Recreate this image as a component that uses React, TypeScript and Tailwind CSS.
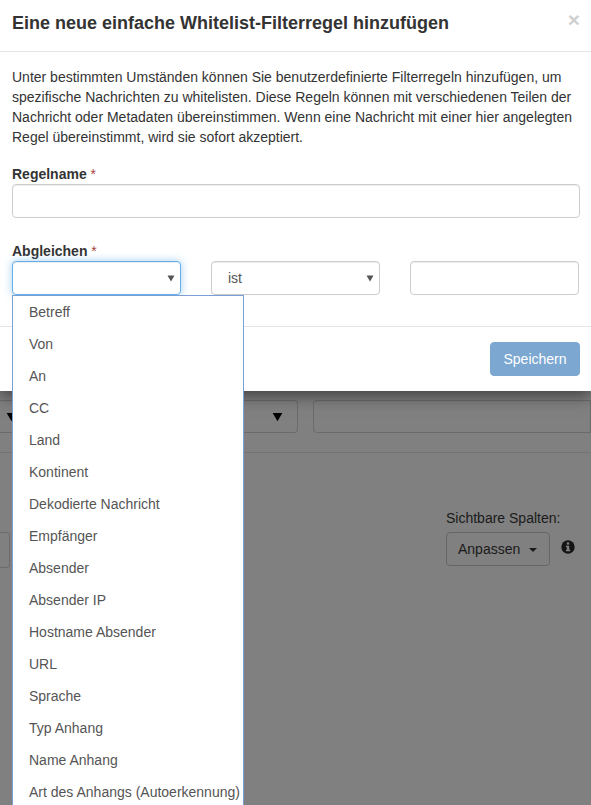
const options = [
  "Betreff",
  "Von",
  "An",
  "CC",
  "Land",
  "Kontinent",
  "Dekodierte Nachricht",
  "Empfänger",
  "Absender",
  "Absender IP",
  "Hostname Absender",
  "URL",
  "Sprache",
  "Typ Anhang",
  "Name Anhang",
  "Art des Anhangs (Autoerkennung)",
];

function Caret({ className }: { className: string }) {
  return (
    <svg className={className} viewBox="0 0 8 8" fill="currentColor">
      <path d="M0.5 1.5h7L4 7.5z" />
    </svg>
  );
}

function Label({ text }: { text: string }) {
  return (
    <label className="block text-[14px] leading-[20px] font-bold text-[#333]">
      {text} <span className="font-normal text-[#a94442]">*</span>
    </label>
  );
}

export default function App() {
  return (
    <div className="relative h-[805px] w-[591px] overflow-hidden bg-[#808080] font-['Liberation_Sans',Arial,sans-serif] text-[14px] text-[#333]">
      {/* Modal */}
      <div className="relative z-10 h-[391px] bg-white shadow-[0_5px_15px_rgba(0,0,0,0.5)]">
        <div className="relative h-[52px] border-b border-[#e5e5e5] px-3 pt-[11px]">
          <h4 className="text-[18px] leading-[25px] font-bold text-[#333]">
            Eine neue einfache Whitelist-Filterregel hinzufügen
          </h4>
          <span className="absolute top-[9px] right-[11px] text-[21px] leading-[21px] font-bold text-[#cfcfcf]">
            ×
          </span>
        </div>

        <div className="h-[274px] px-3 pt-[15px]">
          <p className="text-[14px] leading-[20px] text-[#333]">
            Unter bestimmten Umständen können Sie benutzerdefinierte
            Filterregeln hinzufügen, um spezifische Nachrichten zu whitelisten.
            Diese Regeln können mit verschiedenen Teilen der Nachricht oder
            Metadaten übereinstimmen. Wenn eine Nachricht mit einer hier
            angelegten Regel übereinstimmt, wird sie sofort akzeptiert.
          </p>

          <div className="mt-[17px]">
            <Label text="Regelname" />
            <div className="h-[34px] w-[568px] rounded border border-[#ccc] bg-white shadow-[inset_0_1px_1px_rgba(0,0,0,0.075)]" />
          </div>

          <div className="mt-[23px]">
            <Label text="Abgleichen" />
            <div className="flex gap-[30px]">
              <div className="flex h-[34px] w-[169px] items-center justify-end rounded border border-[#66afe9] bg-white pr-[5px] shadow-[inset_0_1px_1px_rgba(0,0,0,0.075),0_0_8px_rgba(102,175,233,0.6)]">
                <Caret className="h-[8px] w-[8px] text-[#555]" />
              </div>
              <div className="flex h-[34px] w-[169px] items-center justify-between rounded border border-[#ccc] bg-white pr-[5px] pl-4 text-[#555] shadow-[inset_0_1px_1px_rgba(0,0,0,0.075)]">
                <span>ist</span>
                <Caret className="h-[8px] w-[8px] text-[#555]" />
              </div>
              <div className="h-[34px] w-[169px] rounded border border-[#ccc] bg-white shadow-[inset_0_1px_1px_rgba(0,0,0,0.075)]" />
            </div>
          </div>
        </div>

        <div className="flex h-[65px] justify-end border-t border-[#e5e5e5] px-[11px] pt-[15px]">
          <button className="h-[34px] w-[90px] rounded border border-[#7aa7d0] bg-[#7ba7d1] text-[14px] text-white">
            Speichern
          </button>
        </div>
      </div>

      {/* Page behind the backdrop */}
      <div className="flex h-[62px] gap-[15px] border-b border-[#737373] pt-[9px]">
        <div className="flex h-[33px] w-[298px] items-center justify-between rounded-r border border-l-0 border-[#6b6b6b] pr-[14px] pl-[6px]">
          <Caret className="h-[11px] w-[11px] text-black" />
          <Caret className="h-[11px] w-[11px] text-black" />
        </div>
        <div className="h-[33px] flex-1 rounded-l border border-[#6b6b6b]" />
      </div>

      <div className="flex justify-between pt-[55px]">
        <div className="mt-[24px] h-[36px] w-[10px] rounded-r border border-l-0 border-[#6b6b6b]" />
        <div className="mr-[11px] w-[134px] pl-[11px]">
          <div className="-ml-[11px] text-[14px] leading-[20px] whitespace-nowrap text-[#1a1a1a]">
            Sichtbare Spalten:
          </div>
          <div className="-ml-[11px] mt-[4px] flex items-start gap-[11px]">
            <div className="flex h-[34px] w-[104px] items-center gap-[9px] rounded border border-[#666] pl-[11px] text-[#1a1a1a]">
              <span>Anpassen</span>
              <span className="mt-[1px] h-0 w-0 border-x-[4px] border-t-[4px] border-x-transparent border-t-[#1a1a1a]" />
            </div>
            <svg className="mt-[8px] h-[14px] w-[14px] text-[#141414]" viewBox="0 0 14 14">
              <circle cx="7" cy="7" r="6.7" fill="currentColor" />
              <rect x="5.8" y="2.4" width="2.4" height="2.2" fill="#808080" />
              <path d="M4.9 5.8h3.3v4h1v1.5H4.9V9.8h1V7.3h-1z" fill="#808080" />
            </svg>
          </div>
        </div>
      </div>

      {/* Open select list */}
      <ul className="absolute top-[295px] left-[12px] z-20 h-[540px] w-[232px] border border-[#7b9fd4] bg-white text-[14px] text-[#555]">
        {options.map((option) => (
          <li key={option} className="flex h-[32px] items-center pl-4 whitespace-nowrap">
            {option}
          </li>
        ))}
      </ul>
    </div>
  );
}
